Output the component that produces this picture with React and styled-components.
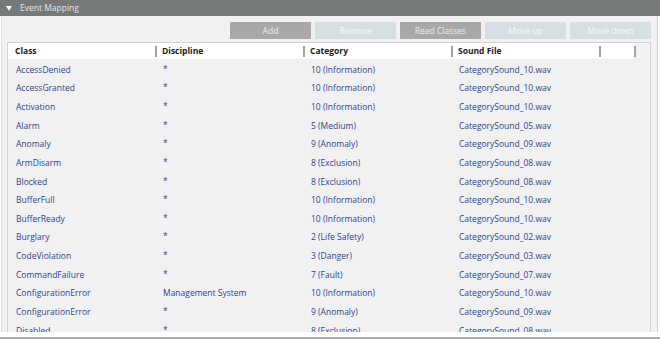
import React from "react"
import styled, { createGlobalStyle } from 'styled-components';

const GlobalStyle = createGlobalStyle`
  html, body { margin: 0; padding: 0; background: #ffffff; }
  body { font-family: "Open Sans", "Noto Sans", sans-serif; font-size: 8.5px; }
`;

const rows = [
  ['AccessDenied', '*', '10 (Information)', 'CategorySound_10.wav'],
  ['AccessGranted', '*', '10 (Information)', 'CategorySound_10.wav'],
  ['Activation', '*', '10 (Information)', 'CategorySound_10.wav'],
  ['Alarm', '*', '5 (Medium)', 'CategorySound_05.wav'],
  ['Anomaly', '*', '9 (Anomaly)', 'CategorySound_09.wav'],
  ['ArmDisarm', '*', '8 (Exclusion)', 'CategorySound_08.wav'],
  ['Blocked', '*', '8 (Exclusion)', 'CategorySound_08.wav'],
  ['BufferFull', '*', '10 (Information)', 'CategorySound_10.wav'],
  ['BufferReady', '*', '10 (Information)', 'CategorySound_10.wav'],
  ['Burglary', '*', '2 (Life Safety)', 'CategorySound_02.wav'],
  ['CodeViolation', '*', '3 (Danger)', 'CategorySound_03.wav'],
  ['CommandFailure', '*', '7 (Fault)', 'CategorySound_07.wav'],
  ['ConfigurationError', 'Management System', '10 (Information)', 'CategorySound_10.wav'],
  ['ConfigurationError', '*', '9 (Anomaly)', 'CategorySound_09.wav'],
  ['Disabled', '*', '8 (Exclusion)', 'CategorySound_08.wav'],
]

const buttons = [
  { label: 'Add', enabled: true },
  { label: 'Remove', enabled: false },
  { label: 'Read Classes', enabled: true },
  { label: 'Move up', enabled: false },
  { label: 'Move down', enabled: false },
]

const App = () => {
  return (
    <Page>
      <GlobalStyle />
      <TitleBar>
        <Caret />
        <Title>Event Mapping</Title>
      </TitleBar>

      <Panel>
        <Toolbar>
          {buttons.map(b => (
            <ToolButton key={b.label} $enabled={b.enabled}>{b.label}</ToolButton>
          ))}
        </Toolbar>

        <Table>
          <HeadRow>
            <HeadCell $first>Class</HeadCell>
            <HeadCell>Discipline</HeadCell>
            <HeadCell>Category</HeadCell>
            <HeadCell>Sound File</HeadCell>
            <HeadCell />
            <HeadCell $blank />
          </HeadRow>

          <Body>
            {rows.map((r, i) => (
              <Row key={i}>
                {r.map((c, j) => (
                  <Cell key={j} $star={c === '*'}>{c}</Cell>
                ))}
              </Row>
            ))}
          </Body>
        </Table>
      </Panel>

      <NextSection />
    </Page>
  )
}

export default App

const Page = styled.div`
  width: 660px;
  height: 339px;
  overflow: hidden;
  background: #ffffff;
`;

const TitleBar = styled.div`
  height: 16px;
  background: #76797a;
  display: flex;
  align-items: center;
  padding-left: 6px;
  box-sizing: border-box;
`;

const Caret = styled.span`
  width: 0;
  height: 0;
  border-left: 3px solid transparent;
  border-right: 3px solid transparent;
  border-top: 5px solid #ffffff;
  margin-right: 8px;
  margin-top: 1px;
`;

const Title = styled.span`
  color: #e4e6e6;
  font-size: 8.5px;
  line-height: 16px;
`;

const Panel = styled.div`
  margin-left: 1px;
  width: 657px;
  height: 316px;
  box-sizing: border-box;
  border-left: 1px solid #dcdcdc;
  border-right: 1px solid #cfcfcf;
  background: #f1f1f1;
  padding: 6px 6px 0 5px;
  overflow: hidden;
`;

const Toolbar = styled.div`
  display: flex;
  justify-content: flex-end;
  gap: 4px;
  height: 17px;
`;

const ToolButton = styled.div`
  width: 81px;
  height: 17px;
  display: flex;
  align-items: center;
  justify-content: center;
  background: ${p => p.$enabled ? '#a8a8a8' : '#d6e0e3'};
  color: ${p => p.$enabled ? '#eaeaea' : '#f6f9f9'};
  font-size: 8.5px;
`;

const Table = styled.div`
  margin-top: 3px;
  border: 1px solid #d2d2d2;
  border-bottom: none;
  height: 400px;
  background: #f1f1f1;
`;

const cols = '147px 148px 148px 148px 35px 1fr';

const HeadRow = styled.div`
  display: grid;
  grid-template-columns: ${cols};
  height: 16px;
`;

const HeadCell = styled.div`
  position: relative;
  background: ${p => p.$blank ? 'transparent' : '#ffffff'};
  font-weight: 700;
  color: #1c1c1c;
  line-height: 16px;
  padding-left: ${p => p.$first ? '7px' : '7px'};
  white-space: nowrap;
  &::before {
    content: '';
    display: ${p => p.$first ? 'none' : 'block'};
    position: absolute;
    left: 0;
    top: 3px;
    bottom: 2px;
    width: 2px;
    background: #a3a3a3;
  }
`;

const Body = styled.div`
  padding-top: 1.7px;
`;

const Row = styled.div`
  display: grid;
  grid-template-columns: ${cols};
  height: 18.65px;
  align-items: center;
`;

const Cell = styled.div`
  padding-left: 8px;
  color: #2c4592;
  white-space: nowrap;
  line-height: 18.65px;
  position: relative;
  top: ${p => p.$star ? '-1px' : '0'};
`;

const NextSection = styled.div`
  margin-top: 5px;
  height: 2px;
  background: #adadad;
`;
